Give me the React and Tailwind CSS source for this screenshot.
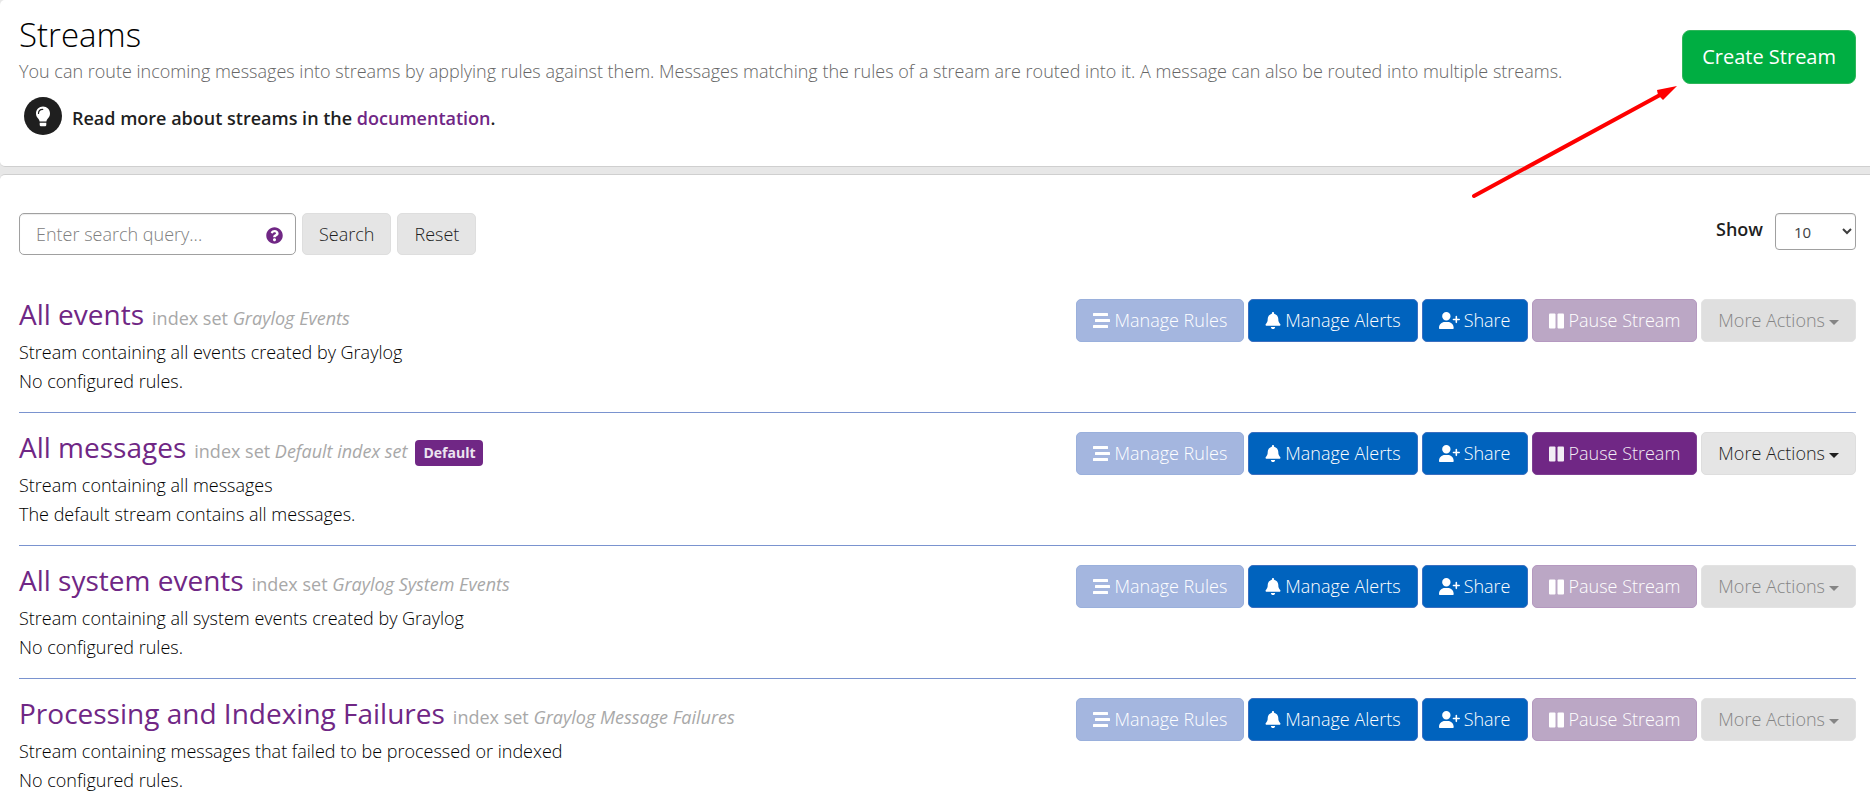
import React from "react";
import { FaBell, FaUserPlus } from "react-icons/fa6";
import { FaQuestionCircle } from "react-icons/fa";

const streams = [
  { title: "All events", indexSet: "Graylog Events", description: "Stream containing all events created by Graylog", rules: "No configured rules.", editable: false },
  { title: "All messages", indexSet: "Default index set", description: "Stream containing all messages", rules: "The default stream contains all messages.", editable: true, isDefault: true },
  { title: "All system events", indexSet: "Graylog System Events", description: "Stream containing all system events created by Graylog", rules: "No configured rules.", editable: false },
  { title: "Processing and Indexing Failures", indexSet: "Graylog Message Failures", description: "Stream containing messages that failed to be processed or indexed", rules: "No configured rules.", editable: false },
];

const tones = {
  blue: "border-[#3a6fc0] bg-[#0063be] text-white disabled:border-[#9ab0dc] disabled:bg-[#a4b6df]",
  purple: "border-[#7e3f92] bg-[#702785] text-[#f3edf5] disabled:border-[#b599c0] disabled:bg-[#bba7c5] disabled:text-white",
  gray: "border-[#dedede] bg-[#e5e5e5] text-[#1f1f1f] disabled:border-[#e3e3e3] disabled:bg-[#dfdfdf] disabled:text-[#858585]",
};

function Button({ tone, children, ...rest }) {
  return (
    <button type="button" className={`flex h-[43px] items-center gap-1 whitespace-nowrap rounded-[5px] border px-4 ${tones[tone]}`} {...rest}>
      {children}
    </button>
  );
}

function RulesIcon() {
  return (
    <svg viewBox="0 0 17 15" className="h-[15px] w-[17px]" fill="currentColor" aria-hidden="true">
      <rect x="0" y="0" width="15" height="3" rx="0.5" />
      <rect x="2" y="6" width="15" height="3" rx="0.5" />
      <rect x="0" y="12" width="15" height="3" rx="0.5" />
    </svg>
  );
}

function PauseIcon() {
  return (
    <svg viewBox="0 0 16 16" className="h-4 w-4" fill="currentColor" aria-hidden="true">
      <rect x="0" y="0.5" width="6.500" height="15" rx="1" />
      <rect x="8.500" y="0.5" width="6.500" height="15" rx="1" />
    </svg>
  );
}

function CaretIcon() {
  return (
    <svg viewBox="0 0 10 5" className="mt-1 h-[5px] w-[10px]" fill="currentColor" aria-hidden="true">
      <path d="M0 0h10L5 5z" />
    </svg>
  );
}

function BulbIcon() {
  return (
    <svg viewBox="0 0 38 38" className="h-[38px] w-[38px] shrink-0" aria-hidden="true">
      <circle cx="19" cy="19" r="19" fill="#1f1f1f" />
      <path d="M19 9.5c-4 0-7 3-7 6.900 0 2 .8 3.500 1.900 4.900 1 1.200 1.400 2 1.700 3.200h6.800c.3-1.200.7-2 1.700-3.200 1.100-1.400 1.900-2.900 1.900-4.900 0-3.900-3-6.900-7-6.900z" fill="#fff" />
      <path d="M15.700 25.700h6.600v2c0 1-.7 1.600-1.600 1.600h-3.400c-.9 0-1.600-.6-1.600-1.600z" fill="#fff" />
      <path d="M14.500 16.500c0-2.500 1.700-4.100 4.200-4.100" fill="none" stroke="#1f1f1f" strokeWidth="1.200" strokeLinecap="round" />
    </svg>
  );
}

function StreamRow({ stream }) {
  const locked = !stream.editable;
  return (
    <li className="flex items-start justify-between gap-6 border-b border-[#7a93cf] pb-4 pt-[19px] last:border-b-0">
      <div>
        <div className="flex h-[39px] items-baseline gap-2">
          <h2 className="text-[28px] font-normal leading-[31px]">
            <a href="#stream" className="text-[#702785]">{stream.title}</a>
          </h2>
          <small className="text-lg font-normal leading-6 text-[#a8a8a8]">
            index set <em>{stream.indexSet}</em>
          </small>
          {stream.isDefault && (
            <span className="rounded bg-[#702785] px-2 text-sm font-bold leading-[26px] text-[#ece4f0]">Default</span>
          )}
        </div>
        <p>{stream.description}</p>
        <p>{stream.rules}</p>
      </div>
      <div className="flex gap-1">
        <Button tone="blue" disabled><RulesIcon />Manage Rules</Button>
        <Button tone="blue"><FaBell className="h-[17px] w-4" />Manage Alerts</Button>
        <Button tone="blue"><FaUserPlus className="h-[17px] w-[21px]" />Share</Button>
        <Button tone="purple" disabled={locked}><PauseIcon />Pause Stream</Button>
        <Button tone="gray" disabled={locked}>More Actions<CaretIcon /></Button>
      </div>
    </li>
  );
}

export default function App() {
  return (
    <div className="flex min-h-screen flex-col gap-[7px] bg-[#e7e7e7] font-['Open_Sans',sans-serif] text-lg font-light leading-[29px] text-black">
      <header className="flex items-start justify-between rounded-l-[5px] border-b border-[#cfcfcf] bg-white pb-[31px] pl-[19px] pr-[14px]">
        <div className="pt-[13px]">
          <h1 className="text-[33px] leading-[44px]">Streams</h1>
          <p className="text-[#666666]">
            You can route incoming messages into streams by applying rules against them. Messages matching the rules of a stream are routed into it. A message can also be routed into multiple streams.
          </p>
          <div className="flex items-start gap-[10px] pl-[5px] pt-[11px]">
            <BulbIcon />
            <p className="pt-[7px] font-semibold text-[#1f1f1f]">
              Read more about streams in the <a href="#documentation" className="text-[#702785]">documentation</a>.
            </p>
          </div>
        </div>
        <div className="relative pt-[30px]">
          <button type="button" className="h-[54px] whitespace-nowrap rounded-lg border border-[#2fb65a] bg-[#00ae42] px-[19px] text-xl font-normal text-white">Create Stream</button>
          <svg viewBox="0 0 208 116" className="pointer-events-none absolute -left-[212px] top-[84px] h-[116px] w-[208px]" aria-hidden="true">
            <path d="M4 112 L190 11" stroke="#fe0000" strokeWidth="4" strokeLinecap="round" />
            <path d="M207 2 L187 6 L188 11 L193 16 Z" fill="#fe0000" />
          </svg>
        </div>
      </header>

      <main className="grow rounded-tl-[5px] border-t border-[#cfcfcf] bg-white pl-[19px] pr-[14px] pt-[38px]">
        <div className="mb-[25px] flex items-start justify-between">
          <form className="flex gap-[6px]" onSubmit={(e) => e.preventDefault()}>
            <div className="relative">
              <input type="text" aria-label="Search query" placeholder="Enter search query..." className="h-[42px] w-[277px] rounded-[5px] border border-[#a0a0a0] bg-white pl-4 pr-10 shadow-[inset_0_1px_1px_rgba(0,0,0,0.075)] placeholder:text-[#808080]" />
              <button type="button" aria-label="Search help" className="absolute right-[13px] top-[14px] text-[#702785]">
                <FaQuestionCircle className="h-[17px] w-[17px]" />
              </button>
            </div>
            <button type="submit" className="h-[42px] rounded-[5px] border border-[#dedede] bg-[#e5e5e5] px-4 text-[#1f1f1f]">Search</button>
            <button type="reset" className="h-[42px] rounded-[5px] border border-[#dedede] bg-[#e5e5e5] px-4 text-[#1f1f1f]">Reset</button>
          </form>
          <div className="flex items-start gap-3">
            <label htmlFor="page-size" className="pt-[2px] font-semibold text-[#1f1f1f]">Show</label>
            <select id="page-size" defaultValue="10" className="h-[37px] w-[81px] rounded border border-[#a0a0a0] bg-white pl-[14px] text-[15px] font-normal text-[#3e3e3e] shadow-[inset_0_1px_1px_rgba(0,0,0,0.075)]">
              <option>10</option>
              <option>50</option>
              <option>100</option>
            </select>
          </div>
        </div>
        <ul>
          {streams.map((stream) => (
            <StreamRow key={stream.title} stream={stream} />
          ))}
        </ul>
      </main>
    </div>
  );
}
